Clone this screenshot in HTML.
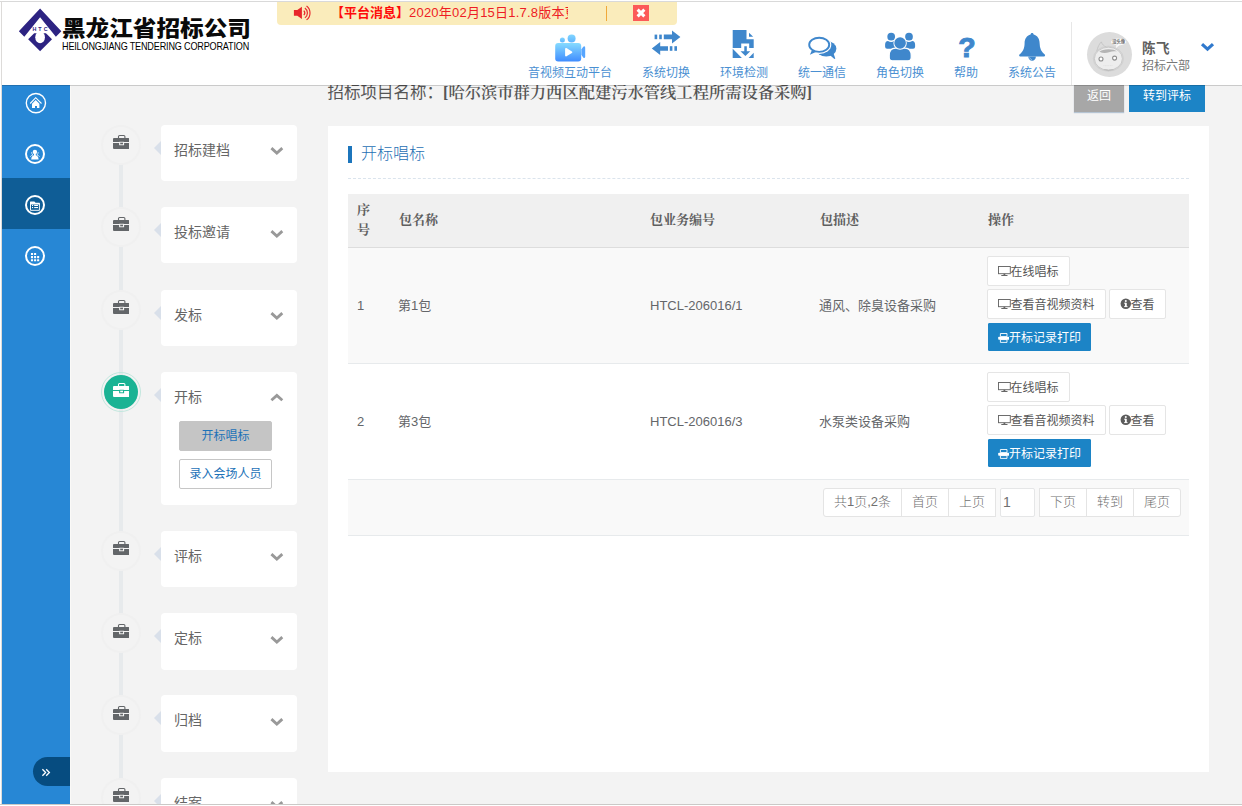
<!DOCTYPE html>
<html lang="zh-CN">
<head>
<meta charset="utf-8">
<title>开标唱标</title>
<style>
*{box-sizing:border-box;margin:0;padding:0}
html,body{width:1242px;height:806px;overflow:hidden;background:#f3f3f3}
body{position:relative;font-family:"Liberation Sans","Noto Sans CJK SC",sans-serif;font-size:13px;color:#676a6c}
.abs{position:absolute}
.serif{font-family:"Liberation Serif","Noto Serif CJK SC",serif}
/* frame */
#frame-top{left:0;top:1px;width:1242px;height:1px;background:#d9d9d9}
#frame-left{left:1px;top:1px;width:1px;height:804px;background:#dddbd9}
#frame-bot{left:0;top:804px;width:1242px;height:1px;background:#cbc9c7}
#frame-bot2{left:0;top:805px;width:1242px;height:1px;background:#fff}
#frame-t0{left:0;top:0;width:1242px;height:1px;background:#fff}
#frame-l0{left:0;top:0;width:1px;height:806px;background:#fff}
/* header */
#header{left:2px;top:2px;width:1240px;height:83px;background:#fff}
#hline{left:2px;top:85px;width:1240px;height:1px;background:rgba(0,0,0,.17)}
#sline{left:70px;top:86px;width:1px;height:718px;background:#faf9f7}
#sidebar{left:2px;top:85px;width:68px;height:719px;background:#2787d5}
#sidebar .active{left:0;top:93px;width:68px;height:51px;background:#0f5d96}

/* logo */
#logo{left:13.700px;top:3.700px;width:52.600px;height:52.600px}
#logo-cn{left:62px;top:13px;height:32px;line-height:32px;font-size:21.400px;font-weight:900;color:#0a0a0a;white-space:nowrap;letter-spacing:0;transform-origin:0 50%;transform:scaleX(1.104)}
#logo-en{left:62px;top:38.500px;height:14px;line-height:14px;font-size:10.600px;color:#000;white-space:nowrap;transform-origin:0 50%;letter-spacing:-0.2px;transform:scaleX(0.857)}
/* notice */
#notice{left:277px;top:2px;width:400px;height:23px;background:#faecbb;border-radius:0 0 4px 4px}
#notice .txt{left:54px;top:0;width:237px;height:23px;line-height:22px;font-size:13px;color:#ee1c24;white-space:nowrap;overflow:hidden}
#notice .txt b{font-weight:700;color:#ff0a0a}
#notice .sep{left:329px;top:4px;width:1px;height:15px;background:#f0a93a}
#notice .close{left:356px;top:3px;width:16px;height:16px;background:#fc5a58}
/* toolbar */
.tool{top:65px;height:16px;line-height:16px;font-size:12px;color:#4a90d2;white-space:nowrap;text-align:center;transform:translateX(-50%)}
.ticon{overflow:visible}
/* user */
#usep{left:1071px;top:22px;width:1px;height:63px;background:#e7e7e7}
#avatar{left:1086.900px;top:31.900px;width:45.200px;height:45.200px;border-radius:50%;background:#dcdcdc;overflow:hidden}
#uname{left:1142px;top:40px;height:18px;line-height:18px;font-size:13.600px;font-weight:700;color:#606060;letter-spacing:.3px}
#udept{left:1142px;top:58px;height:16px;line-height:16px;font-size:12px;color:#777}

/* sidebar icons */
.sic{width:24px;height:24px;overflow:visible}
#expand{left:31px;top:672px;width:37px;height:29px;background:#064c80;border-radius:15px 0 0 15px}
/* timeline */
#tline{left:119px;top:160px;width:4px;height:644px;background:#e7eaec}
.node{width:40px;height:40px;border-radius:50%;background:#f3f3f3;border:2px solid #f0f0f0;left:101px}
.node svg{position:absolute;left:9.900px;top:8.400px;width:16.500px;height:14px}
.node.on{background:#1ab394;background-clip:content-box;border:1px solid #c3e7de;padding:2px}
.node.on svg{left:10.900px;top:9.700px}
.step{left:161px;width:136px;height:56.400px;background:#fff;border-radius:4px}
.step .t{position:absolute;left:13px;top:0;height:50px;line-height:50px;font-size:14px;color:#666}
.step svg.chev{position:absolute;left:109px;top:20.500px;width:15px;height:11px}
.arrow{left:154px;width:0;height:0;border:7px solid transparent;border-right:7px solid #d9e0ea;border-left:0}
.sbtn{position:absolute;left:18px;width:93px;height:30px;line-height:28px;text-align:center;font-size:12px;color:#1d72b8;border:1px solid #c6c6c6;border-radius:2px;background:#fff}
.sbtn.cur{background:#c5c5c5;border-color:#c5c5c5}

#ptitle{left:327.500px;top:80px;height:24px;line-height:24px;font-size:16.500px;color:#555;white-space:nowrap;z-index:0}
#btn-back{left:1074px;top:85px;width:50px;height:27px;background:#a7a7a7;color:#fff;font-size:12px;line-height:22px;text-align:center;box-shadow:0 1px 1px rgba(120,150,180,.5)}
#btn-go{left:1129px;top:85px;width:76px;height:27px;background:#1c84c6;color:#fff;font-size:12px;line-height:22px;text-align:center}
#sect-bar{left:20px;top:20px;width:4px;height:17px;background:#1c75bc}
#sect-t{left:33px;top:15px;height:26px;line-height:26px;font-size:16px;color:#1f70b4;font-weight:300}
#sect-line{left:20px;top:52px;width:841px;height:0;border-top:1px dashed #dbe4ed}
#tbl{left:20px;top:68px;width:841px}
.th{left:0;top:0;width:841px;height:54px;background:#f0f0f0;border-bottom:1px solid #dddddd}
.th span{position:absolute;font-weight:700;font-size:13px;color:#5f5f5f;line-height:17px}
.row{left:0;width:841px;height:116px;border-bottom:1px solid #e7eaec}
.row.odd{background:#f9f9f9}
.row .c{position:absolute;top:48.600px;height:18px;line-height:18px;font-size:13px;color:#646669;white-space:nowrap;font-weight:400}
.b{position:absolute;height:30px;line-height:31px;border:1px solid #e5e5e5;border-radius:2px;background:#fff;color:#555;font-size:12px;white-space:nowrap;padding-left:22.500px}
.b svg{position:absolute}
.b.pri{background:#1c84c6;border-color:#1c84c6;color:#fff;height:28px;line-height:29px;border-radius:1px}
.foot{left:0;top:286px;width:841px;height:56px;background:#f9f9f9;border-bottom:1px solid #e7eaec}
.pg{position:absolute;top:8px;height:29px;line-height:26px;border:1px solid #e4e4e4;background:#fff;color:#707070;font-size:13px;font-weight:300;text-align:center;white-space:nowrap}
/* main */
#panel{left:328px;top:126px;width:881px;height:646px;background:#fff}
</style>
</head>
<body>
<div class="abs" id="ptitle">招标项目名称：<span class="serif" style="font-weight:600;font-size:16.300px;margin-left:0px">[哈尔滨市群力西区配建污水管线工程所需设备采购]</span></div>
<div class="abs" id="btn-back">返回</div><div class="abs" id="btn-go">转到评标</div>
<div class="abs" id="header"></div>

<svg class="abs" id="logo" viewBox="0 0 52 52">
<path d="M25.8 4.500 L46.800 27 L41.400 32.400 L25.800 13.200 L10.200 32.400 L4.800 27 Z" fill="#2d2382"/>
<path d="M14 34.8 L20 28.8 L31.6 28.8 L37.6 34.8 L25.8 46.8 Z" fill="#2d2382"/>
<ellipse cx="25.800" cy="32.800" rx="4.800" ry="6" fill="#fff"/>
<text x="26.700" y="26.400" font-family="Liberation Sans, sans-serif" font-weight="700" font-size="5.300" letter-spacing="2" text-anchor="middle" fill="#2d2382">HTC</text>
</svg>
<div class="abs" id="logo-cn">黑龙江省招标公司</div>
<div class="abs" id="logo-en">HEILONGJIANG TENDERING CORPORATION</div>

<div class="abs" id="notice">
 <svg class="abs" style="left:16px;top:3px;width:19px;height:16px" viewBox="0 0 19 16"><path d="M0.900 5H4.300L8.900 1.700V14.100L4.300 10.800H0.900Z" fill="#e8262b"/><path d="M10.83 5.62A3.4 3.4 0 0 1 10.83 10.18M11.89 2.96A6.1 6.1 0 0 1 11.89 12.84M13.54 0.95A8.7 8.7 0 0 1 13.54 14.85" fill="none" stroke="#e8262b" stroke-width="1.150"/></svg>
 <div class="abs txt"><b>【平台消息】</b><span style="letter-spacing:.22px">2020年02月15日1.7.8版本更新公告</span></div>
 <div class="abs sep"></div>
 <div class="abs close"><svg viewBox="0 0 16 16" width="16" height="16"><path d="M4.6 4.6 L11.4 11.4 M11.4 4.6 L4.6 11.4" stroke="#fff" stroke-width="3" stroke-linecap="butt"/></svg></div>
</div>


<!-- camera -->
<svg class="abs ticon" style="left:552px;top:30px;width:36px;height:34px" viewBox="0 0 36 34">
<defs><linearGradient id="cg" x1="0" y1="0" x2="0" y2="1"><stop offset="0" stop-color="#86dbff"/><stop offset="1" stop-color="#3f8cff"/></linearGradient></defs>
<defs><linearGradient id="cg2" x1="0" y1="0" x2="0" y2="1"><stop offset="0" stop-color="#82d6ff"/><stop offset="1" stop-color="#5fb4ff"/></linearGradient></defs><circle cx="10.400" cy="10" r="2.500" fill="url(#cg2)"/><circle cx="19.600" cy="8.500" r="4" fill="url(#cg2)"/>
<rect x="3.2" y="13" width="26" height="18.6" rx="3" fill="url(#cg)"/>
<path d="M29.400 19.600 L31.200 16.800 Q33.200 15.200 33.200 18 V26.200 Q33.200 29 31.200 27.400 L29.400 24.800Z" fill="#56a5ff"/>
<path d="M14 18.800 L19.400 22.200 L14 25.600Z" fill="#fff" stroke="#fff" stroke-width="1.800" stroke-linejoin="round"/>
</svg>
<div class="abs tool" style="left:570px">音视频互动平台</div>
<!-- switch -->
<svg class="abs ticon" style="left:650px;top:28px;width:32px;height:30px" viewBox="0 0 32 30">
<g fill="#3f87cc"><rect x="4.6" y="6.6" width="2.6" height="4.6"/><rect x="9.2" y="6.6" width="2.6" height="4.6"/><path d="M13.8 6.6H22V2.4L30.4 8.9L22 15.4V11.2H13.8Z"/>
<rect x="24.4" y="18.2" width="2.6" height="4.6"/><rect x="19.8" y="18.2" width="2.6" height="4.6"/><path d="M18 18.2H10.2V14L1.8 20.5L10.2 27V22.8H18Z"/></g>
</svg>
<div class="abs tool" style="left:666px">系统切换</div>
<!-- file -->
<svg class="abs ticon" style="left:730px;top:28px;width:26px;height:32px" viewBox="0 0 26 32">
<g fill="#3f87cc"><path d="M2.700 2H16.500V11.200H23.700V19.900H19.200V15.400H11.200V19.900H2.700Z"/><path d="M19 4.700V8.700H23.200Z"/>
<path d="M2.700 20.800V29.900H11.900Z"/><path d="M23.700 24.800V29.900H18.600Z"/>
<path d="M14.300 18.300H16.800V23.200H20.300L15.400 27.900L10.500 23.200H14.300Z"/></g>
</svg>
<div class="abs tool" style="left:744px">环境检测</div>
<!-- chat -->
<svg class="abs ticon" style="left:806px;top:34px;width:32px;height:26px" viewBox="0 0 32 26">
<ellipse cx="20.200" cy="14.700" rx="10.200" ry="7.700" fill="#3f87cc"/>
<path d="M23.500 20.800L28.400 25L29.300 24.600L27.400 19Z" fill="#3f87cc"/>
<ellipse cx="13.200" cy="10.800" rx="12.100" ry="9.100" fill="#fff"/>
<path d="M6.200 15.400L3.900 20.800L10.400 17.800Z" fill="#3f87cc"/>
<ellipse cx="13.200" cy="10.800" rx="10" ry="7.050" fill="#fff" stroke="#3f87cc" stroke-width="1.900"/>
</svg>
<div class="abs tool" style="left:822px">统一通信</div>
<!-- users -->
<svg class="abs ticon" style="left:884px;top:31px;width:32px;height:31px" viewBox="0 0 32 31">
<g fill="#3f87cc"><circle cx="7.200" cy="5.700" r="3.850"/><circle cx="25" cy="5.700" r="3.850"/>
<path d="M1.100 15.800V13.600Q1.100 10.100 4 9.900Q7.200 12 10.400 9.900L13 17.800H3.100Q1.100 17.800 1.100 15.800Z"/>
<path d="M31.100 15.800V13.600Q31.100 10.100 28.200 9.900Q25 12 21.800 9.900L19.200 17.800H29.100Q31.100 17.800 31.100 15.800Z"/>
<path d="M5.200 26.600V24.500Q5.200 17.300 11.400 17.100H21Q27.250 17.300 27.250 24.500V26.600Q27.250 29.800 24 29.800H8.400Q5.200 29.800 5.200 26.600Z" stroke="#fff" stroke-width="1.300"/>
<circle cx="16.100" cy="12" r="6.700" fill="#fff"/>
<circle cx="16.100" cy="12" r="5.800"/></g>
</svg>
<div class="abs tool" style="left:900px">角色切换</div>
<!-- help -->
<div class="abs" style="left:952px;top:31px;width:30px;height:32px;line-height:33px;text-align:center;font-size:28.500px;font-weight:700;color:#3f87cc;-webkit-text-stroke:1px #3f87cc">?</div>
<div class="abs tool" style="left:966px">帮助</div>
<!-- bell -->
<svg class="abs ticon" style="left:1018px;top:31px;width:28px;height:31px" viewBox="0 0 28 31">
<path d="M14.100 2c0.900 0 1.500 0.600 1.500 1.500C19.500 4.500 21.600 8 21.600 12C21.600 17.500 23.500 21 27 23.700c0.300 0.900-0.200 1.900-1.600 1.900H2.800c-1.400 0-1.900-1-1.600-1.900C4.700 21 6.600 17.500 6.600 12C6.600 8 8.700 4.500 12.600 3.500c0-0.900 0.600-1.500 1.500-1.500z" fill="#3f87cc"/>
<path d="M10.300 25.400c0 2.400 1.700 4.300 3.800 4.300s3.800-1.900 3.800-4.300z" fill="#3f87cc"/>
<path d="M11.600 26.400c0.300 1.300 1.200 2.100 2.300 2.200" fill="none" stroke="#cfe2f5" stroke-width="0.600"/>
</svg>
<div class="abs tool" style="left:1032px">系统公告</div>

<div class="abs" id="usep"></div>
<div class="abs" id="avatar"><svg viewBox="0 0 45.200 45.200" width="45.200" height="45.200" style="position:absolute;left:0;top:0">
<path d="M9.800 19.500C10.500 15 12.600 11.600 14.300 9.900C15.200 12.400 16.800 14 19.200 15" fill="#dcdcdc" stroke="#bdbdbd" stroke-width="0.700"/>
<ellipse cx="21.400" cy="26.700" rx="15.100" ry="12.500" fill="none" stroke="#c9c9c9" stroke-width="0.600"/>
<ellipse cx="21.400" cy="26.700" rx="14" ry="11.500" fill="#ededed" stroke="#c2c2c2" stroke-width="0.800"/>
<path d="M12.400 19.700C15 16.600 27 16.300 29.800 19.400C27 18.900 24.500 19.300 22 20.200C19 21.400 15.500 21.300 12.400 19.700Z" fill="#b4b4b4"/>
<path d="M17 37.600Q21.400 39.600 26.500 37.600Q21.400 38.500 17 37.600Z" fill="#bdbdbd" stroke="#bdbdbd" stroke-width="0.500"/>
<circle cx="14" cy="27" r="2" fill="#fff" stroke="#8e8e8e" stroke-width="1.100"/><circle cx="27.600" cy="26.100" r="2" fill="#fff" stroke="#8e8e8e" stroke-width="1.100"/>
<path d="M16.500 33.600H26" stroke="#d6d6d6" stroke-width="0.500" stroke-dasharray="1 0.600"/>
<path d="M29.500 12.500L28.800 16.300L32.500 13Z" fill="#fafafa"/>
<ellipse cx="31.700" cy="9.900" rx="7.700" ry="3.500" fill="#fafafa"/>
<text x="31.700" y="11.500" font-size="4.400" font-weight="700" text-anchor="middle" fill="#707070" font-family="Liberation Sans, Noto Sans CJK SC, sans-serif">没头像</text>
</svg></div>
<div class="abs" id="uname">陈飞</div>
<div class="abs" id="udept">招标六部</div>
<svg class="abs" style="left:1200px;top:42px;width:15px;height:10px" viewBox="0 0 15 10"><path d="M2 2.100 L7.500 7.100 L13 2.100" fill="none" stroke="#3079cd" stroke-width="3.200"/></svg>
<div class="abs" id="sidebar"><div class="abs active"></div>
<svg class="abs sic" style="left:22px;top:6px" viewBox="0 0 24 24"><circle cx="11.900" cy="12.100" r="9.600" fill="none" stroke="#fff" stroke-width="1.400"/><path d="M6.200 12.500L11.700 6.700L17.500 12.500" fill="none" stroke="#fff" stroke-width="1.100"/><path d="M8 16.900V12.700L11.700 8.900L15.400 12.700V16.900H13V14.900H11V16.900Z" fill="#fff"/></svg>
<svg class="abs sic" style="left:21px;top:57px" viewBox="0 0 24 24"><circle cx="12" cy="12" r="9" fill="none" stroke="#fff" stroke-width="2"/><g fill="#fff"><circle cx="11.900" cy="9.900" r="2.200"/><path d="M11 11.500H12.800V13.200L14 13.700Q15.600 14.700 15.600 17.600H8.200Q8.200 14.700 9.800 13.700L11 13.200Z"/></g><path d="M8.600 10.100Q8.700 12.300 9.900 13Q8 13.400 7.200 14.800M15.200 10.100Q15.100 12.300 13.900 13Q15.800 13.400 16.600 14.800" fill="none" stroke="#fff" stroke-width="0.800" opacity=".9"/></svg>
<svg class="abs sic" style="left:21px;top:108px" viewBox="0 0 24 24"><circle cx="12" cy="12" r="9" fill="none" stroke="#fff" stroke-width="2"/><path d="M7.500 11V17.300H16.400V11" fill="none" stroke="#fff" stroke-width="0.950"/><g fill="#fff"><path d="M7 9.100Q7 8.500 7.600 8.500H11.200Q11.700 8.500 12 9L12.400 9.800H16.300Q16.900 9.800 16.900 10.400V11.400H7Z"/><rect x="9" y="11.900" width="1.100" height="1.100"/><rect x="11.200" y="11.900" width="3.800" height="1.100"/><rect x="9" y="14" width="1.100" height="1.100"/><rect x="11.200" y="14" width="3.800" height="1.100"/></g></svg>
<svg class="abs sic" style="left:21px;top:159px" viewBox="0 0 24 24"><circle cx="12" cy="12" r="9" fill="none" stroke="#fff" stroke-width="2"/><g fill="#fff"><rect x="7.95" y="9.00" width="2.100" height="2.100" rx="0.300"/><rect x="11.05" y="9.00" width="2.100" height="2.100" rx="0.300"/><rect x="7.95" y="12.05" width="2.100" height="2.100" rx="0.300"/><rect x="11.05" y="12.05" width="2.100" height="2.100" rx="0.300"/><rect x="14.10" y="12.05" width="2.100" height="2.100" rx="0.300"/><rect x="7.95" y="15.15" width="2.100" height="2.100" rx="0.300"/><rect x="11.05" y="15.15" width="2.100" height="2.100" rx="0.300"/><rect x="14.10" y="15.15" width="2.100" height="2.100" rx="0.300"/></g></svg>
<div class="abs" id="expand"><svg class="abs" style="left:8.200px;top:11.200px;width:10px;height:9px" viewBox="0 0 10 9"><path d="M1.400 1.200L4.600 4.500L1.400 7.800M5.200 1.200L8.400 4.500L5.200 7.800" fill="none" stroke="#fff" stroke-width="1.300"/></svg></div>
</div>
<div class="abs" id="tline"></div>
<div class="abs node" style="top:124.7px"><svg viewBox="0 0 16.500 14"><path d="M5.500 3.400V1.600Q5.500 0.550 6.600 0.550H10.800Q11.900 0.550 11.900 1.600V3.400" fill="none" stroke="#636669" stroke-width="1.100"/><path fill="#636669" d="M0 4.100Q0 3.100 1 3.100H15.500Q16.500 3.100 16.500 4.100V7H0ZM0 8H16.500V13Q16.500 14 15.500 14H1Q0 14 0 13Z"/><rect x="6.100" y="6.800" width="5" height="3.500" rx="0.500" fill="#f3f3f3"/><rect x="7.200" y="7.700" width="2.800" height="1.600" fill="#636669"/></svg></div>
<div class="abs arrow" style="top:140.7px"></div>
<div class="abs step" style="top:124.7px"><span class="t">招标建档</span><svg class="chev" viewBox="0 0 15 11"><path d="M1.400 3.100 L6.850 8 L12.300 3.100" fill="none" stroke="#999" stroke-width="2.800"/></svg></div>
<div class="abs node" style="top:207.1px"><svg viewBox="0 0 16.500 14"><path d="M5.500 3.400V1.600Q5.500 0.550 6.600 0.550H10.800Q11.900 0.550 11.900 1.600V3.400" fill="none" stroke="#636669" stroke-width="1.100"/><path fill="#636669" d="M0 4.100Q0 3.100 1 3.100H15.500Q16.500 3.100 16.500 4.100V7H0ZM0 8H16.500V13Q16.500 14 15.500 14H1Q0 14 0 13Z"/><rect x="6.100" y="6.800" width="5" height="3.500" rx="0.500" fill="#f3f3f3"/><rect x="7.200" y="7.700" width="2.800" height="1.600" fill="#636669"/></svg></div>
<div class="abs arrow" style="top:223.1px"></div>
<div class="abs step" style="top:207.1px"><span class="t">投标邀请</span><svg class="chev" viewBox="0 0 15 11"><path d="M1.400 3.100 L6.850 8 L12.300 3.100" fill="none" stroke="#999" stroke-width="2.800"/></svg></div>
<div class="abs node" style="top:289.5px"><svg viewBox="0 0 16.500 14"><path d="M5.500 3.400V1.600Q5.500 0.550 6.600 0.550H10.800Q11.900 0.550 11.900 1.600V3.400" fill="none" stroke="#636669" stroke-width="1.100"/><path fill="#636669" d="M0 4.100Q0 3.100 1 3.100H15.500Q16.500 3.100 16.500 4.100V7H0ZM0 8H16.500V13Q16.500 14 15.500 14H1Q0 14 0 13Z"/><rect x="6.100" y="6.800" width="5" height="3.500" rx="0.500" fill="#f3f3f3"/><rect x="7.200" y="7.700" width="2.800" height="1.600" fill="#636669"/></svg></div>
<div class="abs arrow" style="top:305.5px"></div>
<div class="abs step" style="top:289.5px"><span class="t">发标</span><svg class="chev" viewBox="0 0 15 11"><path d="M1.400 3.100 L6.850 8 L12.300 3.100" fill="none" stroke="#999" stroke-width="2.800"/></svg></div>
<div class="abs node on" style="top:371.9px"><svg viewBox="0 0 16.500 14"><path d="M5.500 3.400V1.600Q5.500 0.550 6.600 0.550H10.800Q11.900 0.550 11.900 1.600V3.400" fill="none" stroke="#fff" stroke-width="1.100"/><path fill="#fff" d="M0 4.100Q0 3.100 1 3.100H15.500Q16.500 3.100 16.500 4.100V7H0ZM0 8H16.500V13Q16.500 14 15.500 14H1Q0 14 0 13Z"/><rect x="6.100" y="6.800" width="5" height="3.500" rx="0.500" fill="#1ab394"/><rect x="7.200" y="7.700" width="2.800" height="1.600" fill="#fff"/></svg></div>
<div class="abs arrow" style="top:387.9px"></div>
<div class="abs step" style="top:371.9px;height:133px"><span class="t">开标</span><svg class="chev" viewBox="0 0 15 11"><path d="M1.400 8.300 L6.850 3.400 L12.300 8.300" fill="none" stroke="#999" stroke-width="2.800"/></svg><div class="sbtn cur" style="top:49px">开标唱标</div><div class="sbtn" style="top:87px">录入会场人员</div></div>
<div class="abs node" style="top:530.9px"><svg viewBox="0 0 16.500 14"><path d="M5.500 3.400V1.600Q5.500 0.550 6.600 0.550H10.800Q11.900 0.550 11.900 1.600V3.400" fill="none" stroke="#636669" stroke-width="1.100"/><path fill="#636669" d="M0 4.100Q0 3.100 1 3.100H15.500Q16.500 3.100 16.500 4.100V7H0ZM0 8H16.500V13Q16.500 14 15.500 14H1Q0 14 0 13Z"/><rect x="6.100" y="6.800" width="5" height="3.500" rx="0.500" fill="#f3f3f3"/><rect x="7.200" y="7.700" width="2.800" height="1.600" fill="#636669"/></svg></div>
<div class="abs arrow" style="top:546.9px"></div>
<div class="abs step" style="top:530.9px"><span class="t">评标</span><svg class="chev" viewBox="0 0 15 11"><path d="M1.400 3.100 L6.850 8 L12.300 3.100" fill="none" stroke="#999" stroke-width="2.800"/></svg></div>
<div class="abs node" style="top:613.3px"><svg viewBox="0 0 16.500 14"><path d="M5.500 3.400V1.600Q5.500 0.550 6.600 0.550H10.800Q11.900 0.550 11.900 1.600V3.400" fill="none" stroke="#636669" stroke-width="1.100"/><path fill="#636669" d="M0 4.100Q0 3.100 1 3.100H15.500Q16.500 3.100 16.500 4.100V7H0ZM0 8H16.500V13Q16.500 14 15.500 14H1Q0 14 0 13Z"/><rect x="6.100" y="6.800" width="5" height="3.500" rx="0.500" fill="#f3f3f3"/><rect x="7.200" y="7.700" width="2.800" height="1.600" fill="#636669"/></svg></div>
<div class="abs arrow" style="top:629.3px"></div>
<div class="abs step" style="top:613.3px"><span class="t">定标</span><svg class="chev" viewBox="0 0 15 11"><path d="M1.400 3.100 L6.850 8 L12.300 3.100" fill="none" stroke="#999" stroke-width="2.800"/></svg></div>
<div class="abs node" style="top:695.4px"><svg viewBox="0 0 16.500 14"><path d="M5.500 3.400V1.600Q5.500 0.550 6.600 0.550H10.800Q11.900 0.550 11.900 1.600V3.400" fill="none" stroke="#636669" stroke-width="1.100"/><path fill="#636669" d="M0 4.100Q0 3.100 1 3.100H15.500Q16.500 3.100 16.500 4.100V7H0ZM0 8H16.500V13Q16.500 14 15.500 14H1Q0 14 0 13Z"/><rect x="6.100" y="6.800" width="5" height="3.500" rx="0.500" fill="#f3f3f3"/><rect x="7.200" y="7.700" width="2.800" height="1.600" fill="#636669"/></svg></div>
<div class="abs arrow" style="top:711.4px"></div>
<div class="abs step" style="top:695.4px"><span class="t">归档</span><svg class="chev" viewBox="0 0 15 11"><path d="M1.400 3.100 L6.850 8 L12.300 3.100" fill="none" stroke="#999" stroke-width="2.800"/></svg></div>
<div class="abs node" style="top:778.1px"><svg viewBox="0 0 16.500 14"><path d="M5.500 3.400V1.600Q5.500 0.550 6.600 0.550H10.800Q11.900 0.550 11.900 1.600V3.400" fill="none" stroke="#636669" stroke-width="1.100"/><path fill="#636669" d="M0 4.100Q0 3.100 1 3.100H15.500Q16.500 3.100 16.500 4.100V7H0ZM0 8H16.500V13Q16.500 14 15.500 14H1Q0 14 0 13Z"/><rect x="6.100" y="6.800" width="5" height="3.500" rx="0.500" fill="#f3f3f3"/><rect x="7.200" y="7.700" width="2.800" height="1.600" fill="#636669"/></svg></div>
<div class="abs arrow" style="top:794.1px"></div>
<div class="abs step" style="top:778.1px"><span class="t">结案</span><svg class="chev" viewBox="0 0 15 11"><path d="M1.400 3.100 L6.850 8 L12.300 3.100" fill="none" stroke="#999" stroke-width="2.800"/></svg></div>
<div class="abs" id="panel">
<div class="abs" id="sect-bar"></div><div class="abs" id="sect-t">开标唱标</div><div class="abs" id="sect-line"></div>
<div class="abs" id="tbl">
<div class="abs th serif"><span style="left:9px;top:5.800px;width:14px;line-height:20px">序号</span><span style="left:51px;top:17px">包名称</span><span style="left:302px;top:17px">包业务编号</span><span style="left:472px;top:17px">包描述</span><span style="left:640px;top:17px">操作</span></div>
<div class="abs row odd" style="top:54px">
<span class="c" style="left:9px">1</span><span class="c" style="left:50px">第1包</span><span class="c" style="left:302px">HTCL-206016/1</span><span class="c" style="left:471px">通风、除臭设备采购</span>
<div class="b" style="left:639px;top:8px;width:83px"><svg style="left:9.700px;top:9.400px;width:13px;height:11px" viewBox="0 0 13 11"><rect x="0.500" y="0.500" width="11.800" height="7.200" fill="none" stroke="#666" stroke-width="0.950"/><rect x="5.500" y="7.800" width="1.800" height="1.400" fill="#666"/><rect x="3.300" y="9" width="6.200" height="1" fill="#666"/></svg>在线唱标</div>
<div class="b" style="left:639px;top:41px;width:119px"><svg style="left:9.700px;top:9.400px;width:13px;height:11px" viewBox="0 0 13 11"><rect x="0.500" y="0.500" width="11.800" height="7.200" fill="none" stroke="#666" stroke-width="0.950"/><rect x="5.500" y="7.800" width="1.800" height="1.400" fill="#666"/><rect x="3.300" y="9" width="6.200" height="1" fill="#666"/></svg>查看音视频资料</div>
<div class="b" style="left:761px;top:41px;width:57px;padding-left:20.500px"><svg style="left:10px;top:8.200px;width:11.600px;height:11.600px" viewBox="0 0 12 12"><circle cx="6" cy="6" r="5.400" fill="#5c5c5c"/><rect x="5.100" y="5" width="1.900" height="4" fill="#fff"/><rect x="4.300" y="8.400" width="3.500" height="1" fill="#fff"/><rect x="4.300" y="4.900" width="2" height="1" fill="#fff"/><circle cx="6" cy="3.200" r="1.050" fill="#fff"/></svg>查看</div>
<div class="b pri" style="left:640px;top:75px;width:103px;padding-left:20px"><svg style="left:9px;top:9.300px;width:11.400px;height:10px" viewBox="0 0 11.400 10"><path d="M2.400 0.500H9V3.600H2.400Z" fill="none" stroke="#fff" stroke-width="0.900"/><rect x="0.200" y="3.800" width="11" height="2.900" rx="0.800" fill="#fff"/><path d="M2.400 6.600H9V9.400H2.400Z" fill="none" stroke="#fff" stroke-width="0.900"/></svg>开标记录打印</div>
</div>
<div class="abs row" style="top:170px">
<span class="c" style="left:9px">2</span><span class="c" style="left:50px">第3包</span><span class="c" style="left:302px">HTCL-206016/3</span><span class="c" style="left:471px">水泵类设备采购</span>
<div class="b" style="left:639px;top:8px;width:83px"><svg style="left:9.700px;top:9.400px;width:13px;height:11px" viewBox="0 0 13 11"><rect x="0.500" y="0.500" width="11.800" height="7.200" fill="none" stroke="#666" stroke-width="0.950"/><rect x="5.500" y="7.800" width="1.800" height="1.400" fill="#666"/><rect x="3.300" y="9" width="6.200" height="1" fill="#666"/></svg>在线唱标</div>
<div class="b" style="left:639px;top:41px;width:119px"><svg style="left:9.700px;top:9.400px;width:13px;height:11px" viewBox="0 0 13 11"><rect x="0.500" y="0.500" width="11.800" height="7.200" fill="none" stroke="#666" stroke-width="0.950"/><rect x="5.500" y="7.800" width="1.800" height="1.400" fill="#666"/><rect x="3.300" y="9" width="6.200" height="1" fill="#666"/></svg>查看音视频资料</div>
<div class="b" style="left:761px;top:41px;width:57px;padding-left:20.500px"><svg style="left:10px;top:8.200px;width:11.600px;height:11.600px" viewBox="0 0 12 12"><circle cx="6" cy="6" r="5.400" fill="#5c5c5c"/><rect x="5.100" y="5" width="1.900" height="4" fill="#fff"/><rect x="4.300" y="8.400" width="3.500" height="1" fill="#fff"/><rect x="4.300" y="4.900" width="2" height="1" fill="#fff"/><circle cx="6" cy="3.200" r="1.050" fill="#fff"/></svg>查看</div>
<div class="b pri" style="left:640px;top:75px;width:103px;padding-left:20px"><svg style="left:9px;top:9.300px;width:11.400px;height:10px" viewBox="0 0 11.400 10"><path d="M2.400 0.500H9V3.600H2.400Z" fill="none" stroke="#fff" stroke-width="0.900"/><rect x="0.200" y="3.800" width="11" height="2.900" rx="0.800" fill="#fff"/><path d="M2.400 6.600H9V9.400H2.400Z" fill="none" stroke="#fff" stroke-width="0.900"/></svg>开标记录打印</div>
</div>
<div class="abs foot">
<span class="pg" style="left:475px;width:79px;border-radius:3px 0 0 3px">共1页,2条</span><span class="pg" style="left:553px;width:48px">首页</span><span class="pg" style="left:600px;width:48px">上页</span>
<span class="pg" style="left:652px;width:35px;text-align:left;padding-left:2px;border-color:#e5e6e7;font-size:14px;font-weight:400;border-radius:2px">1</span>
<span class="pg" style="left:691px;width:48px">下页</span><span class="pg" style="left:738px;width:48px">转到</span><span class="pg" style="left:785px;width:48px;border-radius:0 3px 3px 0">尾页</span>
</div>
</div>
</div>
<div class="abs" id="hline"></div><div class="abs" id="sline"></div>
<div class="abs" id="frame-t0"></div><div class="abs" id="frame-l0"></div>
<div class="abs" id="frame-top"></div>
<div class="abs" id="frame-left"></div>
<div class="abs" id="frame-bot"></div>
<div class="abs" id="frame-bot2"></div>
</body>
</html>
